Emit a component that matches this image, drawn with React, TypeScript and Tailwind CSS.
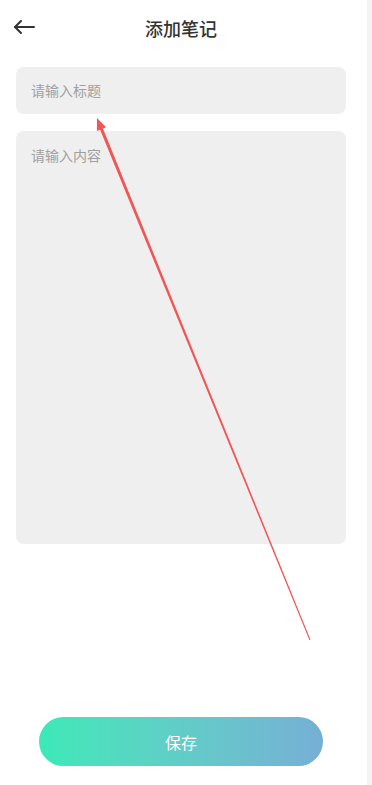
import React from "react";

export default function App() {
  return (
    <div
      className="relative flex h-[785px] w-[372px] overflow-hidden bg-white"
      style={{ fontFamily: '"Noto Sans CJK SC", "Noto Sans", sans-serif' }}
    >
      <div className="flex w-[362px] flex-col">
        <div className="relative flex h-14 items-center justify-center">
          <button className="absolute left-[13px] top-[19px] flex h-4 w-6 items-center">
            <svg width="22" height="16" viewBox="0 0 22 16" fill="none">
              <path d="M21 8H2" stroke="#333" strokeWidth="2" strokeLinecap="round" />
              <path d="M8 2L2 8L8 14" stroke="#333" strokeWidth="2" strokeLinecap="round" strokeLinejoin="round" />
            </svg>
          </button>
          <h1 className="text-[18px] font-medium text-[#333]">添加笔记</h1>
        </div>
        <div className="flex flex-col gap-[17px] px-4 pt-[11px]">
          <div className="flex h-[47px] items-center rounded-lg bg-[#efefef] px-[15px]">
            <span className="text-[14px] text-[#a0a0a0]">请输入标题</span>
          </div>
          <div className="h-[413px] rounded-lg bg-[#efefef] px-[15px] pt-[11px]">
            <span className="text-[14px] text-[#a0a0a0]">请输入内容</span>
          </div>
        </div>
        <div className="flex flex-1 items-end justify-center pb-[19px]">
          <button className="flex h-[49px] w-[284px] items-center justify-center rounded-full bg-gradient-to-r from-[#3be9b7] to-[#76afd5] text-[16px] text-white">
            保存
          </button>
        </div>
      </div>
      <div className="w-[5px] bg-white" />
      <div className="w-[5px] bg-[#f4f4f4]" />
      <svg
        className="pointer-events-none absolute left-0 top-0"
        width="372"
        height="785"
        viewBox="0 0 372 785"
      >
        <polygon
          points="97,118 106.1,127.2 102.9,128.5 310.5,639.8 309.5,640.2 100.1,129.7 96.9,131"
          fill="#f25555"
        />
      </svg>
    </div>
  );
}
